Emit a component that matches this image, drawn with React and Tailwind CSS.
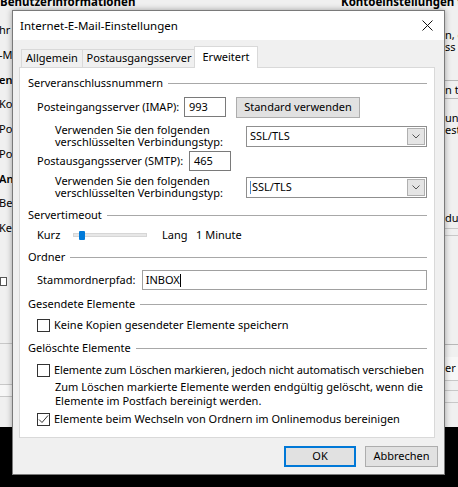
import React from "react";

function Group({ title, className = "" }) {
  return (
    <div className={`flex items-center h-[16px] ${className}`}>
      <span className="shrink-0 pr-[5px]">{title}</span>
      <div className="flex-1 h-px bg-[#a8a8a8]" />
    </div>
  );
}

function Check({ checked }) {
  return (
    <span className="w-[13px] h-[13px] border border-[#333333] bg-white flex items-center justify-center shrink-0">
      {checked && (
        <svg width="11" height="11" viewBox="0 0 11 11">
          <path d="M1 5.5 L4 8.5 L10 1.5" fill="none" stroke="#333333" strokeWidth="1" />
        </svg>
      )}
    </span>
  );
}

function Select({ caret }) {
  return (
    <div className="w-[181px] h-[21px] border border-[#8f8f8f] bg-white flex items-center pl-[3px] pr-px">
      {caret && <span className="w-px h-[13px] bg-[#4a8ad0] mr-[1px]" />}
      <span className="flex-1">SSL/TLS</span>
      <span className="w-[18px] h-[17px] bg-[#e5e5e5] border border-[#b0b0b0] flex items-center justify-center">
        <svg width="8" height="5" viewBox="0 0 8 5">
          <path d="M0.5 0.5 L4 4 L7.5 0.5" stroke="#555555" fill="none" />
        </svg>
      </span>
    </div>
  );
}

function Button({ children, primary }) {
  return (
    <div
      className={`h-[21px] flex items-center justify-center bg-[#e1e1e1] ${
        primary ? "w-[72px] border-2 border-[#0078d7]" : "w-[73px] border border-[#adadad]"
      }`}
    >
      {children}
    </div>
  );
}

export default function App() {
  return (
    <div className="relative w-[458px] h-[487px] bg-black overflow-hidden font-['Noto_Sans',sans-serif] text-[11px] text-black">
      {/* Window behind the dialog */}
      <div className="absolute left-0 top-0 w-full h-[427px] bg-[#f0f0f0] overflow-hidden">
        <div className="flex h-[16px] -mt-[6px] leading-[16px] text-[11.5px] font-bold">
          <span className="w-[341px] shrink-0 whitespace-nowrap">Benutzerinformationen</span>
          <span className="shrink-0 whitespace-nowrap">Kontoeinstellungen testen</span>
        </div>
        <div className="flex justify-between">
          <div className="flex flex-col mt-[8px] w-[12px]">
            {["hr", "-M", "en", "Kor", "Pos", "Pos", "Anr", "Ben", "Ken"].map((t, i) => (
              <div
                key={i}
                className={`h-[24.75px] leading-[24.75px] whitespace-nowrap -ml-px ${
                  i === 2 || i === 6 ? "font-semibold" : ""
                }`}
              >
                {t}
              </div>
            ))}
            <div className="mt-[36px] w-[7px] h-[9px] bg-white border border-[#555555]" />
            <div className="mt-[57px] h-px w-[12px] bg-[#c8c8c8]" />
            <div className="mt-[40px] h-[13px] w-[12px] border-y border-[#c8c8c8] bg-[#f7f7f7]" />
          </div>
          <div className="flex flex-col w-[13px] whitespace-nowrap">
            <div className="mt-[19px] h-[12px] leading-[12px]">n, e</div>
            <div className="h-[12px] leading-[12px]">ss a</div>
            <div className="mt-[27px] h-px bg-[#b8b8b8]" />
            <div className="mt-[2px] h-[14px] leading-[14px]">n t</div>
            <div className="mt-[1px] h-px bg-[#b8b8b8]" />
            <div className="mt-[13px] h-[12px] leading-[12px]">unc</div>
            <div className="h-[12px] leading-[12px]">est</div>
            <div className="mt-[76px] h-[12px] leading-[12px]">dus</div>
            <div className="mt-[4px] h-px bg-[#c8c8c8]" />
            <div className="mt-[6px] h-px bg-[#c8c8c8]" />
            <div className="mt-[108px] h-px bg-[#b8b8b8]" />
            <div className="mt-[12px] h-[24px] leading-[22px] border-b border-[#c8c8c8] bg-[#f7f7f7]">er</div>
            <div className="mt-[9px] h-px bg-[#c8c8c8]" />
            <div className="mt-[11px] h-px bg-[#c8c8c8]" />
          </div>
        </div>
      </div>

      {/* Dialog */}
      <div className="absolute left-[12px] top-[10px] w-[433px] h-[465px] border border-[#7a7a7a] bg-[#f0f0f0] flex flex-col shadow-[0_0_6px_rgba(0,0,0,0.35)]">
        <div className="h-[29px] bg-white flex items-center justify-between pl-[7px] pr-[11px] text-[11.5px]">
          <span>Internet-E-Mail-Einstellungen</span>
          <svg width="11" height="11" viewBox="0 0 11 11">
            <path d="M0.5 0.5 L10.5 10.5 M10.5 0.5 L0.5 10.5" stroke="#111111" strokeWidth="1" />
          </svg>
        </div>

        <div className="flex-1 pt-[6px] pl-[6px] pr-[8px] flex flex-col">
          {/* Tabs */}
          <div className="flex items-end h-[21px] pl-[2px]">
            <div className="w-[62px] h-[18px] border border-b-0 border-[#d9d9d9] flex items-center justify-center">
              Allgemein
            </div>
            <div className="w-[113px] h-[18px] border-t border-r border-[#d9d9d9] flex items-center justify-center">
              Postausgangsserver
            </div>
            <div className="relative z-10 -ml-[2px] w-[64px] h-[22px] -mb-px bg-white border border-b-0 border-[#d9d9d9] flex items-center justify-center pb-[1px]">
              Erweitert
            </div>
          </div>

          {/* Panel */}
          <div className="w-[416px] h-[371px] bg-white border border-[#d9d9d9] pl-[8px] pr-[7px] flex flex-col">
            <Group title="Serveranschlussnummern" className="mt-[7px]" />

            <div className="flex items-center h-[20px] mt-[6px] pl-[9px]">
              <span className="w-[147px]">Posteingangsserver (IMAP):</span>
              <div className="w-[42px] h-[20px] border border-[#7a7a7a] flex items-center pl-[4px]">993</div>
              <div className="ml-[10px] w-[124px] h-[21px] bg-[#e1e1e1] border border-[#adadad] flex items-center justify-center">
                Standard verwenden
              </div>
            </div>

            <div className="flex items-center h-[26px] mt-[6px] pl-[27px]">
              <span className="w-[191px] leading-[12.5px]">
                Verwenden Sie den folgenden
                <br />
                verschlüsselten Verbindungstyp:
              </span>
              <Select />
            </div>

            <div className="flex items-center h-[20px] mt-[2px] pl-[9px]">
              <span className="w-[152px]">Postausgangsserver (SMTP):</span>
              <div className="w-[42px] h-[20px] border border-[#7a7a7a] flex items-center pl-[4px]">465</div>
            </div>

            <div className="flex items-center h-[26px] mt-[3px] pl-[27px]">
              <span className="w-[191px] leading-[12.5px]">
                Verwenden Sie den folgenden
                <br />
                verschlüsselten Verbindungstyp:
              </span>
              <Select caret />
            </div>

            <Group title="Servertimeout" className="mt-[7px]" />

            <div className="flex items-center h-[16px] mt-[4px] pl-[9px]">
              <span className="w-[36px]">Kurz</span>
              <div className="relative w-[74px] h-[4px] bg-[#e7e7e7] border border-[#d6d6d6]">
                <div className="absolute left-[5px] -top-[3.5px] w-[6px] h-[9px] rounded-[1px] bg-[#007ad9]" />
              </div>
              <span className="ml-[15px] w-[34px]">Lang</span>
              <span>1 Minute</span>
            </div>

            <Group title="Ordner" className="mt-[6px]" />

            <div className="flex items-center h-[20px] mt-[5px] pl-[9px]">
              <span className="w-[105px]">Stammordnerpfad:</span>
              <div className="w-[286px] h-[20px] border border-[#a0a0a0] flex items-center pl-[3px]">
                INBOX
                <span className="w-px h-[13px] bg-black" />
              </div>
            </div>

            <Group title="Gesendete Elemente" className="mt-[6px]" />

            <div className="flex items-center gap-[4px] h-[16px] mt-[5px] pl-[9px]">
              <Check />
              <span className="whitespace-nowrap">Keine Kopien gesendeter Elemente speichern</span>
            </div>

            <Group title="Gelöschte Elemente" className="mt-[7px]" />

            <div className="flex items-center gap-[4px] h-[16px] mt-[6px] pl-[9px]">
              <Check />
              <span className="whitespace-nowrap tracking-[-0.1px]">
                Elemente zum Löschen markieren, jedoch nicht automatisch verschieben
              </span>
            </div>

            <div className="mt-[2px] pl-[27px] leading-[14px] whitespace-nowrap">
              Zum Löschen markierte Elemente werden endgültig gelöscht, wenn die
              <br />
              Elemente im Postfach bereinigt werden.
            </div>

            <div className="flex items-center gap-[4px] h-[16px] mt-[3px] pl-[9px]">
              <Check checked />
              <span className="whitespace-nowrap">Elemente beim Wechseln von Ordnern im Onlinemodus bereinigen</span>
            </div>
          </div>

          {/* Buttons */}
          <div className="flex justify-end gap-[9px] mt-[8px] -mr-[2px]">
            <Button primary>OK</Button>
            <Button>Abbrechen</Button>
          </div>
        </div>
      </div>
    </div>
  );
}
